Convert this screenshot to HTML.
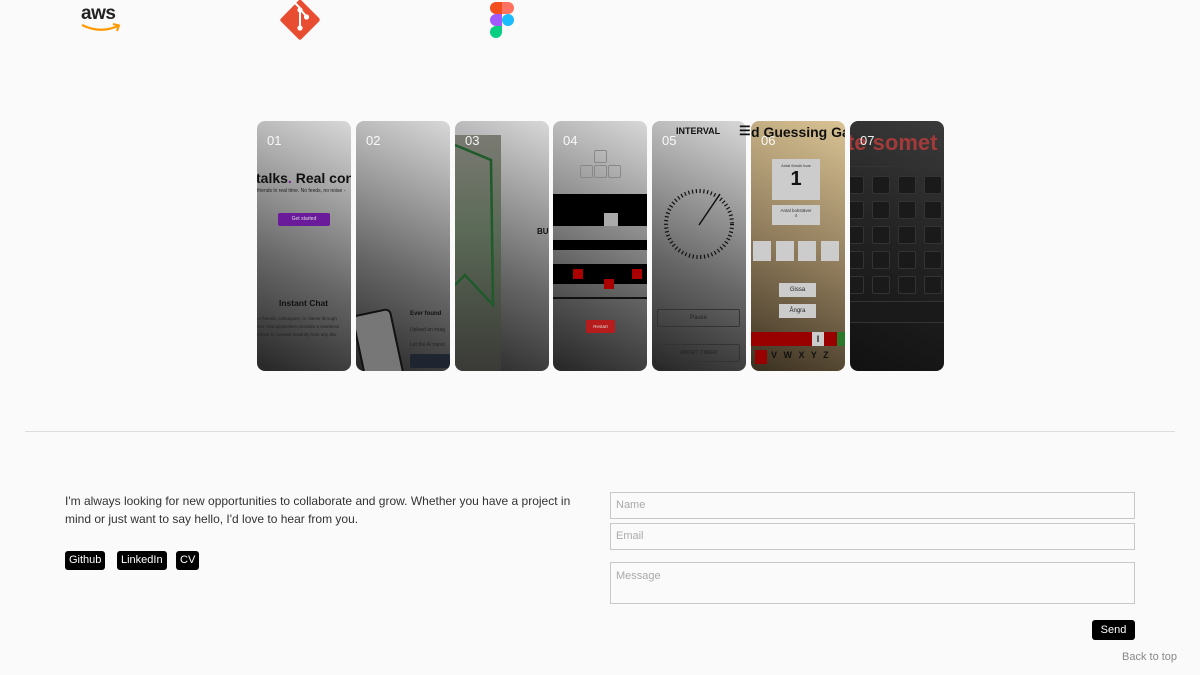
<!DOCTYPE html>
<html><head><meta charset="utf-8"><style>
*{box-sizing:border-box;margin:0;padding:0}
body{width:1200px;height:675px;background:#fafafa;position:relative;overflow:hidden;font-family:"Liberation Sans",sans-serif;color:#222}
.abs{position:absolute}
.card{position:absolute;top:121px;width:94px;height:250px;border-radius:8px;overflow:hidden;background:linear-gradient(25deg,#262626 0%,#666 40%,#d8d8d8 100%)}
.num{position:absolute;color:#fff;font-size:13px;font-family:"Liberation Sans",sans-serif;opacity:.92}
.t{position:absolute;font-family:"Liberation Sans",sans-serif;white-space:nowrap}
.btn{position:absolute;background:#000;color:#fff;font-size:11px;border-radius:3px;padding:0 4px;height:19px;line-height:19px}
.inp{position:absolute;left:610px;width:525px;border:1px solid #c8c8c8;background:#fafafa;font-size:11px;color:#aaa;padding:0 5px}
.k{position:absolute;width:18px;height:18px;background:#1a1a1a;border:1px solid #333;border-radius:2px}
</style></head><body>

<div class="t" style="left:81px;top:3px;font-size:19px;font-weight:bold;color:#222;letter-spacing:-0.5px">aws</div>
<svg class="abs" style="left:80px;top:22px" width="42" height="12"><path d="M2 3 Q20 12 38 4" stroke="#f90" stroke-width="2.2" fill="none"/><path d="M33 2 L39 3.5 L37 9" stroke="#f90" stroke-width="2" fill="none"/></svg>
<svg class="abs" style="left:279px;top:0" width="42" height="40" viewBox="0 0 42 40"><path d="M21 -1 L40 18 Q41.5 20 40 21.5 L22.5 39 Q21 40.5 19.5 39 L2 21.5 Q0.5 20 2 18.5 Z" fill="#e84d31"/><path d="M15 2 L21 8 L21 27 M21 9 L27 16" stroke="#fff" stroke-width="2" fill="none"/><circle cx="21" cy="10" r="2.6" fill="#fff"/><circle cx="27.5" cy="17" r="2.6" fill="#fff"/><circle cx="21" cy="28" r="2.6" fill="#fff"/></svg>
<svg class="abs" style="left:490px;top:2px" width="24" height="36" viewBox="0 0 24 36"><path d="M0 6a6 6 0 0 1 6-6h6v12H6a6 6 0 0 1-6-6z" fill="#f24e1e"/><path d="M12 0h6a6 6 0 0 1 0 12h-6z" fill="#ff7262"/><path d="M0 18a6 6 0 0 1 6-6h6v12H6a6 6 0 0 1-6-6z" fill="#a259ff"/><circle cx="18" cy="18" r="6" fill="#1abcfe"/><path d="M0 30a6 6 0 0 1 6-6h6v6a6 6 0 0 1-12 0z" fill="#0acf83"/></svg>

<div class="card" style="left:257px">
 <div class="t" style="left:-1px;top:49px;font-size:14px;font-weight:bold;color:#111">talks<span style="color:#7b1fa2">.</span> Real con</div>
 <div class="t" style="left:0;top:67px;font-size:5px;color:#222">friends in real time. No feeds, no noise -</div>
 <div class="abs" style="left:21px;top:92px;width:52px;height:13px;background:#6a1b9a;border-radius:2px;color:#ddd;font-size:5px;text-align:center;line-height:13px">Get started</div>
 <div class="t" style="left:22px;top:177px;font-size:8.5px;font-weight:bold;color:#111">Instant Chat</div>
 <div class="t" style="left:0;top:194px;font-size:4.5px;color:#222;line-height:8px">ur friends, colleagues, or clients through<br>Our chat application provides a seamless<br>erface to connect instantly from any dev</div>
</div>
<div class="card" style="left:356px">
 <div class="abs" style="left:2px;top:190px;width:40px;height:70px;border:2px solid #111;border-radius:6px;transform:rotate(-12deg);background:#777"></div>
 <div class="t" style="left:54px;top:190px;font-size:6px;font-weight:bold;color:#111">Ever found</div>
 <div class="t" style="left:54px;top:206px;font-size:5px;color:#222">Upload an imag</div>
 <div class="t" style="left:54px;top:221px;font-size:5px;color:#222">Let the AI transl</div>
 <div class="abs" style="left:54px;top:233px;width:40px;height:14px;background:#1e2530;border-radius:2px"></div>
</div>
<div class="card" style="left:455px">
 <div class="abs" style="left:0;top:14px;width:46px;height:236px;background:linear-gradient(180deg,#7a7a72,#5c6a58 40%,#3a3a36)"></div>
 <svg class="abs" style="left:0;top:14px" width="46" height="200"><path d="M0 10 L36 25 L38 170 L10 140 L0 150" stroke="#1f5a2a" stroke-width="2.5" fill="none"/></svg>
</div>
<div class="t" style="left:537px;top:227px;font-size:8px;font-weight:bold;color:#111">BU</div>
<div class="card" style="left:553px">
 <div class="abs" style="left:41px;top:29px;width:13px;height:13px;border:1px solid #888;border-radius:2px"></div>
 <div class="abs" style="left:27px;top:44px;width:13px;height:13px;border:1px solid #888;border-radius:2px"></div>
 <div class="abs" style="left:41px;top:44px;width:13px;height:13px;border:1px solid #888;border-radius:2px"></div>
 <div class="abs" style="left:55px;top:44px;width:13px;height:13px;border:1px solid #888;border-radius:2px"></div>
 <div class="abs" style="left:0;top:73px;width:94px;height:32px;background:#000"></div>
 <div class="abs" style="left:51px;top:92px;width:14px;height:13px;background:#aaa"></div>
 <div class="abs" style="left:0;top:119px;width:94px;height:10px;background:#000"></div>
 <div class="abs" style="left:0;top:143px;width:94px;height:20px;background:#000"></div>
 <div class="abs" style="left:20px;top:148px;width:10px;height:10px;background:#a00"></div>
 <div class="abs" style="left:79px;top:148px;width:10px;height:10px;background:#a00"></div>
 <div class="abs" style="left:51px;top:158px;width:10px;height:10px;background:#a00"></div>
 <div class="abs" style="left:0;top:176px;width:94px;height:2px;background:#111"></div>
 <div class="abs" style="left:33px;top:199px;width:29px;height:13px;background:#b71c1c;border-radius:1px;color:#ddd;font-size:4.5px;text-align:center;line-height:13px">Restart</div>
</div>
<div class="card" style="left:652px">
 <div class="t" style="left:24px;top:5px;font-size:9px;font-weight:bold;color:#111">INTERVAL</div>
 <svg class="abs" style="left:10px;top:66px" width="74" height="74"><circle cx="37" cy="37" r="33" fill="none" stroke="#111" stroke-width="4" stroke-dasharray="1.2 2.6"/><line x1="37" y1="38" x2="58" y2="7" stroke="#111" stroke-width="1.5"/></svg>
 <div class="abs" style="left:5px;top:188px;width:83px;height:18px;border:1px solid #333;border-radius:2px;font-size:6px;color:#222;text-align:center;line-height:16px">Pause</div>
 <div class="abs" style="left:5px;top:223px;width:83px;height:18px;border:1px solid #333;border-radius:2px;font-size:5.5px;color:#222;text-align:center;line-height:16px">ABORT TIMER</div>
</div>
<div class="card" style="left:751px;background:linear-gradient(25deg,#3a3020 0%,#8a7758 45%,#d9c394 100%)">
 <div class="t" style="left:0;top:3px;font-size:14px;font-weight:bold;color:#111">d Guessing Ga</div>
 <div class="abs" style="left:21px;top:38px;width:48px;height:41px;background:#ccc;text-align:center;font-size:4px;color:#333;padding-top:4px">Antal försök kvar<div style="font-size:20px;font-weight:bold;color:#111;line-height:22px">1</div></div>
 <div class="abs" style="left:21px;top:84px;width:48px;height:20px;background:#ccc;text-align:center;font-size:4.5px;color:#333;padding-top:3px">Antal bokstäver<br>4</div>
 <div class="abs" style="left:2px;top:120px;width:18px;height:20px;background:#ccc"></div>
 <div class="abs" style="left:25px;top:120px;width:18px;height:20px;background:#ccc"></div>
 <div class="abs" style="left:47px;top:120px;width:18px;height:20px;background:#ccc"></div>
 <div class="abs" style="left:70px;top:120px;width:18px;height:20px;background:#ccc"></div>
 <div class="abs" style="left:28px;top:162px;width:37px;height:14px;background:#ccc;font-size:6px;text-align:center;line-height:14px">Gissa</div>
 <div class="abs" style="left:28px;top:183px;width:37px;height:14px;background:#ccc;font-size:6px;text-align:center;line-height:14px">Ångra</div>
 <div class="abs" style="left:0;top:211px;width:94px;height:14px;background:#900"></div>
 <div class="abs" style="left:61px;top:211px;width:12px;height:14px;background:#ccc;font-size:9px;font-weight:bold;text-align:center;line-height:14px">I</div>
 <div class="abs" style="left:86px;top:211px;width:8px;height:14px;background:#2a7a2a"></div>
 <div class="abs" style="left:4px;top:229px;width:12px;height:14px;background:#900"></div>
 <div class="t" style="left:20px;top:229px;font-size:9px;font-weight:bold;color:#111;word-spacing:4px">V W X Y Z</div>
</div>
<div class="card" style="left:850px;background:linear-gradient(25deg,#111 0%,#222 50%,#3a3a3a 100%)">
 <div class="t" style="left:-3px;top:9px;font-size:22px;font-weight:bold;color:#a33a3a">te somet</div>
 <div class="abs" style="left:0;top:45px;width:94px;height:1px;background:#333"></div>
 <div class="k" style="left:-4px;top:55px"></div><div class="k" style="left:22px;top:55px"></div><div class="k" style="left:48px;top:55px"></div><div class="k" style="left:74px;top:55px"></div>
 <div class="k" style="left:-4px;top:80px"></div><div class="k" style="left:22px;top:80px"></div><div class="k" style="left:48px;top:80px"></div><div class="k" style="left:74px;top:80px"></div>
 <div class="k" style="left:-4px;top:105px"></div><div class="k" style="left:22px;top:105px"></div><div class="k" style="left:48px;top:105px"></div><div class="k" style="left:74px;top:105px"></div>
 <div class="k" style="left:-4px;top:130px"></div><div class="k" style="left:22px;top:130px"></div><div class="k" style="left:48px;top:130px"></div><div class="k" style="left:74px;top:130px"></div>
 <div class="k" style="left:-4px;top:155px"></div><div class="k" style="left:22px;top:155px"></div><div class="k" style="left:48px;top:155px"></div><div class="k" style="left:74px;top:155px"></div>
 <div class="abs" style="left:0;top:180px;width:94px;height:22px;background:#1a1a1a;border-top:1px solid #333;border-bottom:1px solid #333"></div>
</div>
<div class="t" style="left:739px;top:123px;font-size:13px;font-weight:bold;color:#111">☰</div>
<div class="num" style="left:267px;top:133px">01</div>
<div class="num" style="left:366px;top:133px">02</div>
<div class="num" style="left:465px;top:133px">03</div>
<div class="num" style="left:563px;top:133px">04</div>
<div class="num" style="left:662px;top:133px">05</div>
<div class="num" style="left:761px;top:133px">06</div>
<div class="num" style="left:860px;top:133px">07</div>

<div class="abs" style="left:25px;top:431px;width:1150px;height:1px;background:#ddd"></div>

<div class="abs" style="left:65px;top:492px;width:512px;font-size:12px;line-height:18px;color:#333">I'm always looking for new opportunities to collaborate and grow. Whether you have a project in mind or just want to say hello, I'd love to hear from you.</div>
<div class="btn" style="left:65px;top:551px">Github</div>
<div class="btn" style="left:117px;top:551px">LinkedIn</div>
<div class="btn" style="left:176px;top:551px">CV</div>

<div class="inp" style="top:492px;height:27px;line-height:25px">Name</div>
<div class="inp" style="top:523px;height:27px;line-height:25px">Email</div>
<div class="inp" style="top:562px;height:42px;padding-top:7px">Message</div>
<div class="btn" style="left:1092px;top:620px;width:43px;height:20px;text-align:center;line-height:20px;font-size:11px;border-radius:3px;padding:0">Send</div>
<div class="t" style="left:1122px;top:651px;font-size:11px;color:#888">Back to top</div>
</body></html>
